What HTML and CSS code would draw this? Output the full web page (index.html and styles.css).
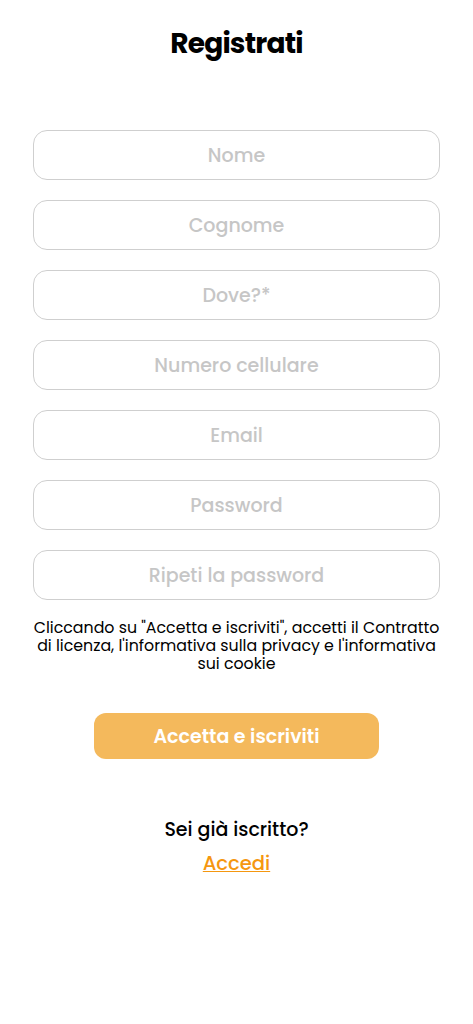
FILE: index.html
```html
<!DOCTYPE html>
<html lang="it">
<head>
    <meta charset="UTF-8">
    <meta name="viewport" content="width=device-width, initial-scale=1.0">
    <title>Registrati</title>
    <link rel="stylesheet" href="styles.css">
</head>
<body>
    <div class="page">
        <h1 class="title">Registrati</h1>

        <form class="signup-form">
            <input class="field" type="text" placeholder="Nome">
            <input class="field" type="text" placeholder="Cognome">
            <input class="field" type="text" placeholder="Dove?*">
            <input class="field" type="tel" placeholder="Numero cellulare">
            <input class="field" type="email" placeholder="Email">
            <input class="field" type="password" placeholder="Password">
            <input class="field" type="password" placeholder="Ripeti la password">
        </form>

        <p class="terms">Cliccando su "Accetta e iscriviti", accetti il Contratto di licenza, l'informativa sulla privacy e l'informativa sui cookie</p>

        <button class="submit-btn" type="button">Accetta e iscriviti</button>

        <div class="login">
            <p class="login-question">Sei già iscritto?</p>
            <a class="login-link" href="#">Accedi</a>
        </div>
    </div>
</body>
</html>
```

FILE: styles.css
```css
body {
    margin: 0;
    padding: 0;
    background-color: #fff;
    font-family: "Poppins", "Open Sans", "DejaVu Sans", sans-serif;
    color: #000;
}

.page {
    display: flex;
    flex-direction: column;
    align-items: center;
    padding: 0 33px;
}

.title {
    margin: 26px 0 0;
    font-size: 28px;
    line-height: 36px;
    font-weight: 700;
    letter-spacing: -0.8px;
}

.signup-form {
    display: flex;
    flex-direction: column;
    gap: 20px;
    width: 100%;
    margin-top: 68px;
}

.field {
    box-sizing: border-box;
    width: 100%;
    height: 50px;
    border: 1px solid #cfcfcf;
    border-radius: 14px;
    background: #fff;
    font-family: inherit;
    font-size: 19px;
    font-weight: 500;
    text-align: center;
    color: #333;
    outline: none;
}

.field::placeholder {
    color: #c6c6c6;
}

/* testo legale sotto il form */
.terms {
    margin: 19px -2px 0;
    font-size: 15.8px;
    line-height: 18px;
    font-weight: 400;
    text-align: center;
}

.submit-btn {
    margin-top: 40px;
    width: 285px;
    height: 46px;
    border: none;
    border-radius: 12px;
    background-color: #f4b95c;
    color: #fff;
    font-family: inherit;
    font-size: 19px;
    font-weight: 600;
}

.login {
    display: flex;
    flex-direction: column;
    align-items: center;
    gap: 10px;
    margin-top: 59px;
}

.login-question {
    margin: 0;
    font-size: 19px;
    line-height: 24px;
    font-weight: 500;
}

.login-link {
    font-size: 19.5px;
    line-height: 24px;
    font-weight: 500;
    color: #f5970f;
}
```
